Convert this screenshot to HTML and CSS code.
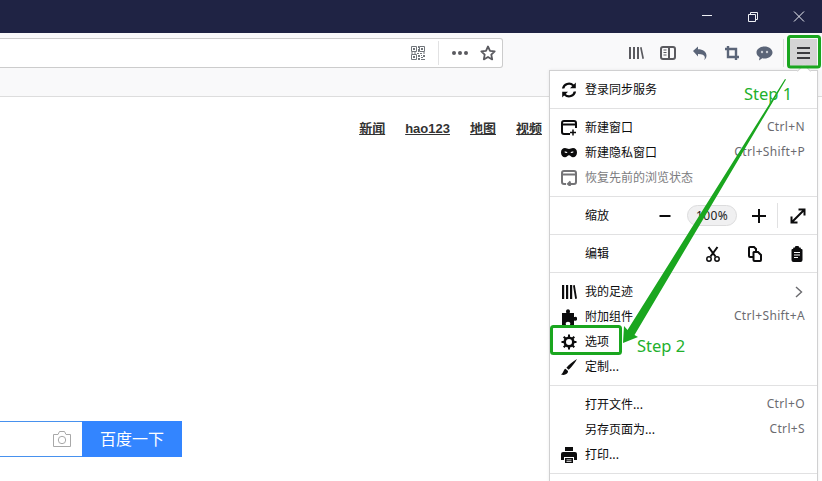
FILE: index.html
```html
<!DOCTYPE html>
<html lang="zh-CN">
<head>
<meta charset="utf-8">
<title>Firefox 菜单</title>
<link rel="stylesheet" href="styles.css">
</head>
<body>
<div class="window">
  <header class="titlebar">
    <span class="winbtn"><svg width="12" height="12" viewBox="0 0 12 12"><path d="M1 4.500h10" class="wl"/></svg></span>
    <span class="winbtn"><svg width="12" height="12" viewBox="0 0 12 12"><path d="M1.500 3.500h7v7h-7zM3.500 3.500v-2h7v7h-2" class="wl"/></svg></span>
    <span class="winbtn"><svg width="12" height="12" viewBox="0 0 12 12"><path d="M1 .5l10 10M11 .5l-10 10" class="wl"/></svg></span>
  </header>

  <div class="toolbar">
    <div class="urlbar">
      <svg class="qr" width="14" height="14" viewBox="0 0 14 14"><path d="M.5.5h5v5h-5zM8.500.5h5v5h-5zM.5 8.500h5v5h-5z" fill="none" stroke="#70757a"/><path d="M2 2h2v2H2zM10 2h2v2h-2zM2 10h2v2H2zM7 0h1v2H7zM7 3h1v3H7zM6 7h2v1H6zM0 6.500h2v1H0zM3 6.500h2v1H3zM9 7h2v1H9zM12 6.500h2v1h-2zM7 9h2v2H7zM10 9h1v1h-1zM12 9h2v2h-2zM10 11h2v1h-2zM7 12h2v2H7zM10 13h4v1h-4z" fill="#70757a"/></svg>
      <i class="urlsep"></i>
      <svg class="dots" width="16" height="4" viewBox="0 0 16 4"><circle cx="2" cy="2" r="2"/><circle cx="8" cy="2" r="2"/><circle cx="14" cy="2" r="2"/></svg>
      <svg class="star" width="16" height="16" viewBox="0 0 16 16"><path d="M8 1.500l2 4.300 4.700.6-3.400 3.300.9 4.700L8 11.900l-4.200 2.500.9-4.700L1.300 6.400 6 5.800z" fill="none" stroke="#5a5a5f" stroke-width="1.800" stroke-linejoin="round"/></svg>
    </div>
    <div class="tools">
      <span class="tool"><svg width="16" height="14" viewBox="0 0 16 14"><path d="M1 1h2v12H1zM5 1h2v12H5zM9 1h2v12H9zM12 1.500l1.600-.5 2.400 11.500-1.600.5z" fill="#5a5a5f"/></svg></span>
      <span class="tool"><svg width="16" height="14" viewBox="0 0 16 14"><rect x="1" y="1" width="14" height="12" rx="2" fill="none" stroke="#5a5a5f" stroke-width="2"/><path d="M8 1h2v12H8zM3.500 3.500h3v1h-3zM3.500 6h3v1h-3zM3.500 8.500h3v1h-3z" fill="#5a5a5f"/></svg></span>
      <span class="tool"><svg width="16" height="16" viewBox="0 0 16 16"><path d="M1 6l5-4.500V4.200c5 0 8.500 2.500 8.500 6.300 0 2.100-1 3.700-2.500 4.500.7-1 1-2 .8-3-.4-2-2.600-3-6.800-3v2.500z" fill="#5b6578"/></svg></span>
      <span class="tool"><svg width="14" height="14" viewBox="0 0 14 14"><path d="M3 0v11h11M0 3h11v11" fill="none" stroke="#5b6578" stroke-width="2.400"/></svg></span>
      <span class="tool"><svg width="17" height="15" viewBox="0 0 17 15"><path d="M8.500.5c4.500 0 8 2.700 8 6s-3.500 6-8 6c-.8 0-1.500-.1-2.200-.2L3 14.500l.6-3.200C1.700 10.200.5 8.500.5 6.500c0-3.300 3.500-6 8-6z" fill="#5b6578"/><circle cx="6" cy="6" r="1.200" fill="#c8ccd2"/><circle cx="11" cy="6" r="1.200" fill="#c8ccd2"/></svg></span>
      <i class="toolsep"></i>
      <span class="hamburger"><svg width="14" height="12" viewBox="0 0 14 12"><path d="M0 0h13v2H0zM0 5h13v2H0zM0 10h13v2H0z" fill="#3a3a3e"/></svg></span>
    </div>
  </div>

  <div class="bookmarks"></div>

  <main class="page">
    <nav class="nav">
      <a class="navlink">新闻</a>
      <a class="navlink">hao123</a>
      <a class="navlink">地图</a>
      <a class="navlink">视频</a>
    </nav>
    <form class="search">
      <div class="searchinput">
        <svg width="18" height="16" viewBox="0 0 18 16"><path d="M.5 3.500h4.500l1.500-3h5l1.500 3h4.500v12H.5z" fill="none" stroke="#a8a8a8"/><circle cx="9" cy="9" r="3.700" fill="none" stroke="#a8a8a8"/></svg>
      </div>
      <div class="searchbtn">百度一下</div>
    </form>
  </main>
</div>

<aside class="menu">
  <section class="msec">
    <div class="mrow"><svg class="ico" viewBox="0 0 16 16"><path d="M14.800 .5v5.800H9l2.300-2.300A4.800 4.800 0 0 0 3.300 6.500H.9a7.100 7.100 0 0 1 12-3.900zM1.200 15.500V9.700H7l-2.300 2.300a4.800 4.800 0 0 0 8-2.500h2.400a7.100 7.100 0 0 1-12 3.900z"/></svg><span class="mlabel">登录同步服务</span></div>
  </section>
  <section class="msec">
    <div class="mrow"><svg class="ico" viewBox="0 0 16 16"><path d="M9 14H3a2 2 0 0 1-2-2V3a2 2 0 0 1 2-2h10a2 2 0 0 1 2 2v5" class="ms"/><path d="M1 4.500h14" class="ms"/><path d="M12 9.500v6M9 12.500h6" class="mt"/></svg><span class="mlabel">新建窗口</span><span class="mkey">Ctrl+N</span></div>
    <div class="mrow"><svg class="ico" viewBox="0 0 16 16"><path d="M4 3c1.500 0 2.700 1 4 1s2.500-1 4-1c2.300 0 4 1.800 4 4.400 0 2.800-1.800 4.800-4 4.800-1.800 0-2.700-2-4-2s-2.200 2-4 2c-2.200 0-4-2-4-4.800C0 4.800 1.700 3 4 3zM3.500 6.800c0 .7.700 1.200 1.500 1.200s1.400-.4 1.500-.8C5.500 6.600 4.200 6.300 3.500 6.800zm9 0c-.7-.5-2-.2-3 .4.100.4.700.8 1.500.8s1.500-.5 1.500-1.200z" fill-rule="evenodd"/></svg><span class="mlabel">新建隐私窗口</span><span class="mkey">Ctrl+Shift+P</span></div>
    <div class="mrow off"><svg class="ico" viewBox="0 0 16 16"><path d="M5 14H3a2 2 0 0 1-2-2V3a2 2 0 0 1 2-2h10a2 2 0 0 1 2 2v9a2 2 0 0 1-2 2H7.500" class="ms grey"/><path d="M1 4.500h14" class="ms grey"/><path d="M9.500 11.500L7 14l2.500 2" class="ms grey"/></svg><span class="mlabel">恢复先前的浏览状态</span></div>
  </section>
  <section class="msec">
    <div class="mrow"><span class="mlabel indent">缩放</span>
      <div class="zoom">
        <span class="zbtn minus"><svg class="ico" viewBox="0 0 16 16"><path d="M2.500 8h11" class="ms"/></svg></span>
        <span class="pill">100%</span>
        <span class="zbtn plus"><svg class="ico" viewBox="0 0 16 16"><path d="M8 1v14M1 8h14" class="ms"/></svg></span>
        <span class="zbtn expand"><svg class="ico" viewBox="0 0 16 16"><path d="M2 14L14 2M8.500 1.500H14.500V7.500M1.500 8.500V14.500H7.500" class="ms"/></svg></span>
      </div>
    </div>
  </section>
  <section class="msec">
    <div class="mrow"><span class="mlabel indent">编辑</span>
      <div class="edit">
        <span class="ebtn"><svg class="ico" viewBox="0 0 16 16"><path d="M3.500 1l7 9.500M12.500 1l-7 9.500" class="ms"/><circle cx="4" cy="13" r="2.200" class="mt"/><circle cx="12" cy="13" r="2.200" class="mt"/></svg></span>
        <span class="ebtn"><svg class="ico" viewBox="0 0 16 16"><path d="M6 11H3a1 1 0 0 1-1-1V2a1 1 0 0 1 1-1h4l2 2v2" class="ms"/><path d="M7 6h4l3 3v5a1 1 0 0 1-1 1H7.500A1 1 0 0 1 6.500 14V6.500z" class="ms"/></svg></span>
        <span class="ebtn"><svg class="ico" viewBox="0 0 16 16"><path d="M6 1.500a2 2 0 0 1 4 0h1.500l.5 1.500h.500a1 1 0 0 1 1 1v10a2 2 0 0 1-2 2H4.500a2 2 0 0 1-2-2V4a1 1 0 0 1 1-1H4l.5-1.500z"/><path d="M5 6h6v1H5zM5 8.500h6v1H5zM5 11h4v1H5z" fill="#fff"/></svg></span>
      </div>
    </div>
  </section>
  <section class="msec">
    <div class="mrow"><svg class="ico" viewBox="0 0 16 16"><path d="M1 1h2.200v14H1zM5 1h2.200v14H5zM9 1h2.200v14H9zM12 1.500l1.800-.5 2.200 13.500-1.800.5z"/></svg><span class="mlabel">我的足迹</span><svg class="chev" width="8" height="12" viewBox="0 0 8 12"><path d="M1 1l5.500 5L1 11" fill="none" stroke="#6a6a6e" stroke-width="1.400"/></svg></div>
    <div class="mrow"><svg class="ico" viewBox="0 0 16 16"><path d="M5 2.500c0-1.400 1-2.300 2-2.300s2 .9 2 2.300c0 .6-.3 1-.3 1.500H13v4c.5 0 .9-.3 1.500-.3 1 0 1.700.9 1.700 2s-.7 2-1.700 2c-.6 0-1-.3-1.500-.3V16H9c0-.6.3-1 .3-1.500 0-1-.9-1.700-2.300-1.700S4.700 13.500 4.700 14.500c0 .5.300 .9.300 1.500H1V4h4.300c0-.5-.3-.9-.3-1.500z"/></svg><span class="mlabel">附加组件</span><span class="mkey">Ctrl+Shift+A</span></div>
    <div class="mrow"><svg class="ico" viewBox="0 0 16 16"><circle cx="8" cy="8" r="4.300" class="mt wide"/><path d="M8 .5v3M8 12.500v3M.5 8h3M12.500 8h3M2.700 2.700l2.100 2.100M11.200 11.200l2.100 2.100M13.300 2.700l-2.100 2.100M4.800 11.200l-2.100 2.100" class="ms"/></svg><span class="mlabel">选项</span></div>
    <div class="mrow"><svg class="ico brush" viewBox="0 0 16 16"><path d="M16 0C12 2.500 7.600 6 5.400 8.800l2.300 2C10.600 8 14 4 16 0zM4.500 9.800C2.300 10.300 2.800 14 0 15.500c3.800 1.400 7.400-.7 7-3.600z"/></svg><span class="mlabel">定制...</span></div>
  </section>
  <section class="msec">
    <div class="mrow"><span class="mlabel indent">打开文件...</span><span class="mkey">Ctrl+O</span></div>
    <div class="mrow"><span class="mlabel indent">另存页面为...</span><span class="mkey">Ctrl+S</span></div>
    <div class="mrow"><svg class="ico" viewBox="0 0 16 16"><path d="M4 0h8v4H4zM2 5h12a2 2 0 0 1 2 2v6h-3v-3H3v3H0V7a2 2 0 0 1 2-2zM4 11h8v5H4z"/><path d="M5.500 12.500h5v.8h-5zM5.500 14h5v.8h-5z" fill="#fff"/></svg><span class="mlabel">打印...</span></div>
  </section>
  <section class="mend"></section>
</aside>

<svg class="marks" width="822" height="481" viewBox="0 0 822 481">
  <polygon class="gfill" points="785,79 786,79.500 634.500,335 638,337 623,343 624,326 627.500,330"/>
  <rect class="gbox" x="788.500" y="36.500" width="31" height="30.500" rx="2"/>
  <rect class="gbox" x="551.500" y="326.500" width="69" height="27" rx="2"/>
</svg>
<span class="step step1">Step 1</span>
<span class="step step2">Step 2</span>
</body>
</html>
```

FILE: styles.css
```css
* { box-sizing: border-box; }
html, body { margin: 0; height: 100%; overflow: hidden; background: #fff; }
body { font-family: "Noto Sans", "Noto Sans CJK SC", sans-serif; font-size: 12px; color: #0c0c0d; position: relative; }

.window { display: flex; flex-direction: column; height: 481px; }

.titlebar { height: 33px; background: #1f2344; display: flex; justify-content: flex-end; flex: none; }
.winbtn { width: 46px; display: flex; align-items: center; justify-content: center; }
.wl { fill: none; stroke: #eef0f5; stroke-width: 1; }

.toolbar { height: 35px; background: #f9f9fa; display: flex; flex: none; padding-top: 5px; }
.urlbar { width: 503px; height: 30px; background: #fff; border: 1px solid #ccc; border-left: 0; border-radius: 0 3px 3px 0; display: flex; align-items: center; justify-content: flex-end; padding-right: 6px; }
.urlsep { width: 1px; height: 24px; background: #e2e2e3; margin: 0 13px; }
.qr { display: block; }
.dots { fill: #5a5a5f; margin-right: 12px; }
.star { display: block; }

.tools { flex: 1; display: flex; align-items: center; justify-content: flex-end; padding-right: 5px; height: 30px; }
.tool { width: 32px; display: flex; justify-content: center; align-items: center; }
.toolsep { width: 1px; height: 28px; background: #dcdcdd; margin: 0 6px 0 3px; }
.hamburger { width: 27px; height: 29px; background: #d4d4d5; display: flex; align-items: center; justify-content: center; }

.bookmarks { height: 29px; background: #f9f9fa; border-bottom: 1px solid #ddd; flex: none; }

.page { flex: 1; display: flex; flex-direction: column; background: #fff; }
.nav { display: flex; justify-content: flex-end; gap: 20px; padding: 23px 280px 0 0; height: 324px; }
.navlink { font-family: "Liberation Sans", "Noto Sans CJK SC", sans-serif; font-size: 13px; font-weight: 700; line-height: 18px; height: 18px; color: #333; text-decoration: underline; }
.search { display: flex; height: 36px; width: 182px; }
.searchinput { width: 82px; border-top: 1px solid #4791ee; border-bottom: 1px solid #4791ee; display: flex; align-items: center; justify-content: flex-end; padding-right: 11px; background: #fff; }
.searchbtn { width: 100px; background: #3385ff; color: #fff; font-family: "Noto Sans CJK SC", sans-serif; font-size: 16px; display: flex; align-items: center; justify-content: center; padding-bottom: 2px; }

.menu { position: absolute; left: 549px; top: 70px; width: 269px; height: 430px; background: #fff; border: 1px solid #d0d0d1; box-shadow: 0 0 3px rgba(0,0,0,.08); }
.menu::before { content: ""; position: absolute; right: 8px; top: -5px; width: 9px; height: 9px; background: #fff; border-left: 1px solid #d0d0d1; border-top: 1px solid #d0d0d1; transform: rotate(45deg); }
.msec { padding: 6px 0; border-bottom: 1px solid #e1e1e2; }
.mrow { height: 25px; display: flex; align-items: center; padding: 0 12px 0 11px; line-height: 16px; }
.mrow .zoom, .mrow .edit { margin-right: -12px; }
.ico { width: 16px; height: 16px; flex: none; fill: #0c0c0d; display: block; }
.ms { fill: none; stroke: #0c0c0d; stroke-width: 2; }
.mt { fill: none; stroke: #0c0c0d; stroke-width: 1.500; }
.mt.wide { stroke-width: 2.600; }
.ms.grey { stroke: #737376; }
.mlabel { margin-left: 8px; padding-bottom: 2px; font-family: "Noto Sans CJK SC", sans-serif; font-size: 12px; }
.mlabel.indent { margin-left: 24px; }
.mkey { margin-left: auto; padding-bottom: 2px; color: #6b6b70; font-size: 12px; letter-spacing: .35px; }
.off .mlabel { color: #7c7c80; }
.chev { margin-left: auto; margin-right: 2px; }

.zoom { margin-left: auto; display: flex; align-items: center; }
.zbtn { display: flex; justify-content: center; align-items: center; height: 25px; }
.minus { width: 44px; }
.plus { width: 36px; margin-left: 4px; }
.expand { width: 40px; border-left: 1px solid #e1e1e2; }
.pill { width: 50px; height: 21px; border-radius: 11px; background: #f0f0f1; border: 1px solid #dcdcdd; font-size: 12px; letter-spacing: .35px; color: #222; display: flex; align-items: center; justify-content: center; }

.edit { margin-left: auto; display: flex; gap: 2px; }
.ebtn { width: 40px; display: flex; justify-content: center; align-items: center; }

.marks { position: absolute; left: 0; top: 0; pointer-events: none; }
.gfill { fill: #1aa61f; }
.gbox { fill: none; stroke: #1aa61f; stroke-width: 3; }
.step { position: absolute; color: #22b02b; font-family: "Noto Sans", sans-serif; font-size: 16.500px; line-height: 20px; }
.step1 { left: 744px; top: 84px; }
.step2 { left: 637px; top: 336px; }
```
